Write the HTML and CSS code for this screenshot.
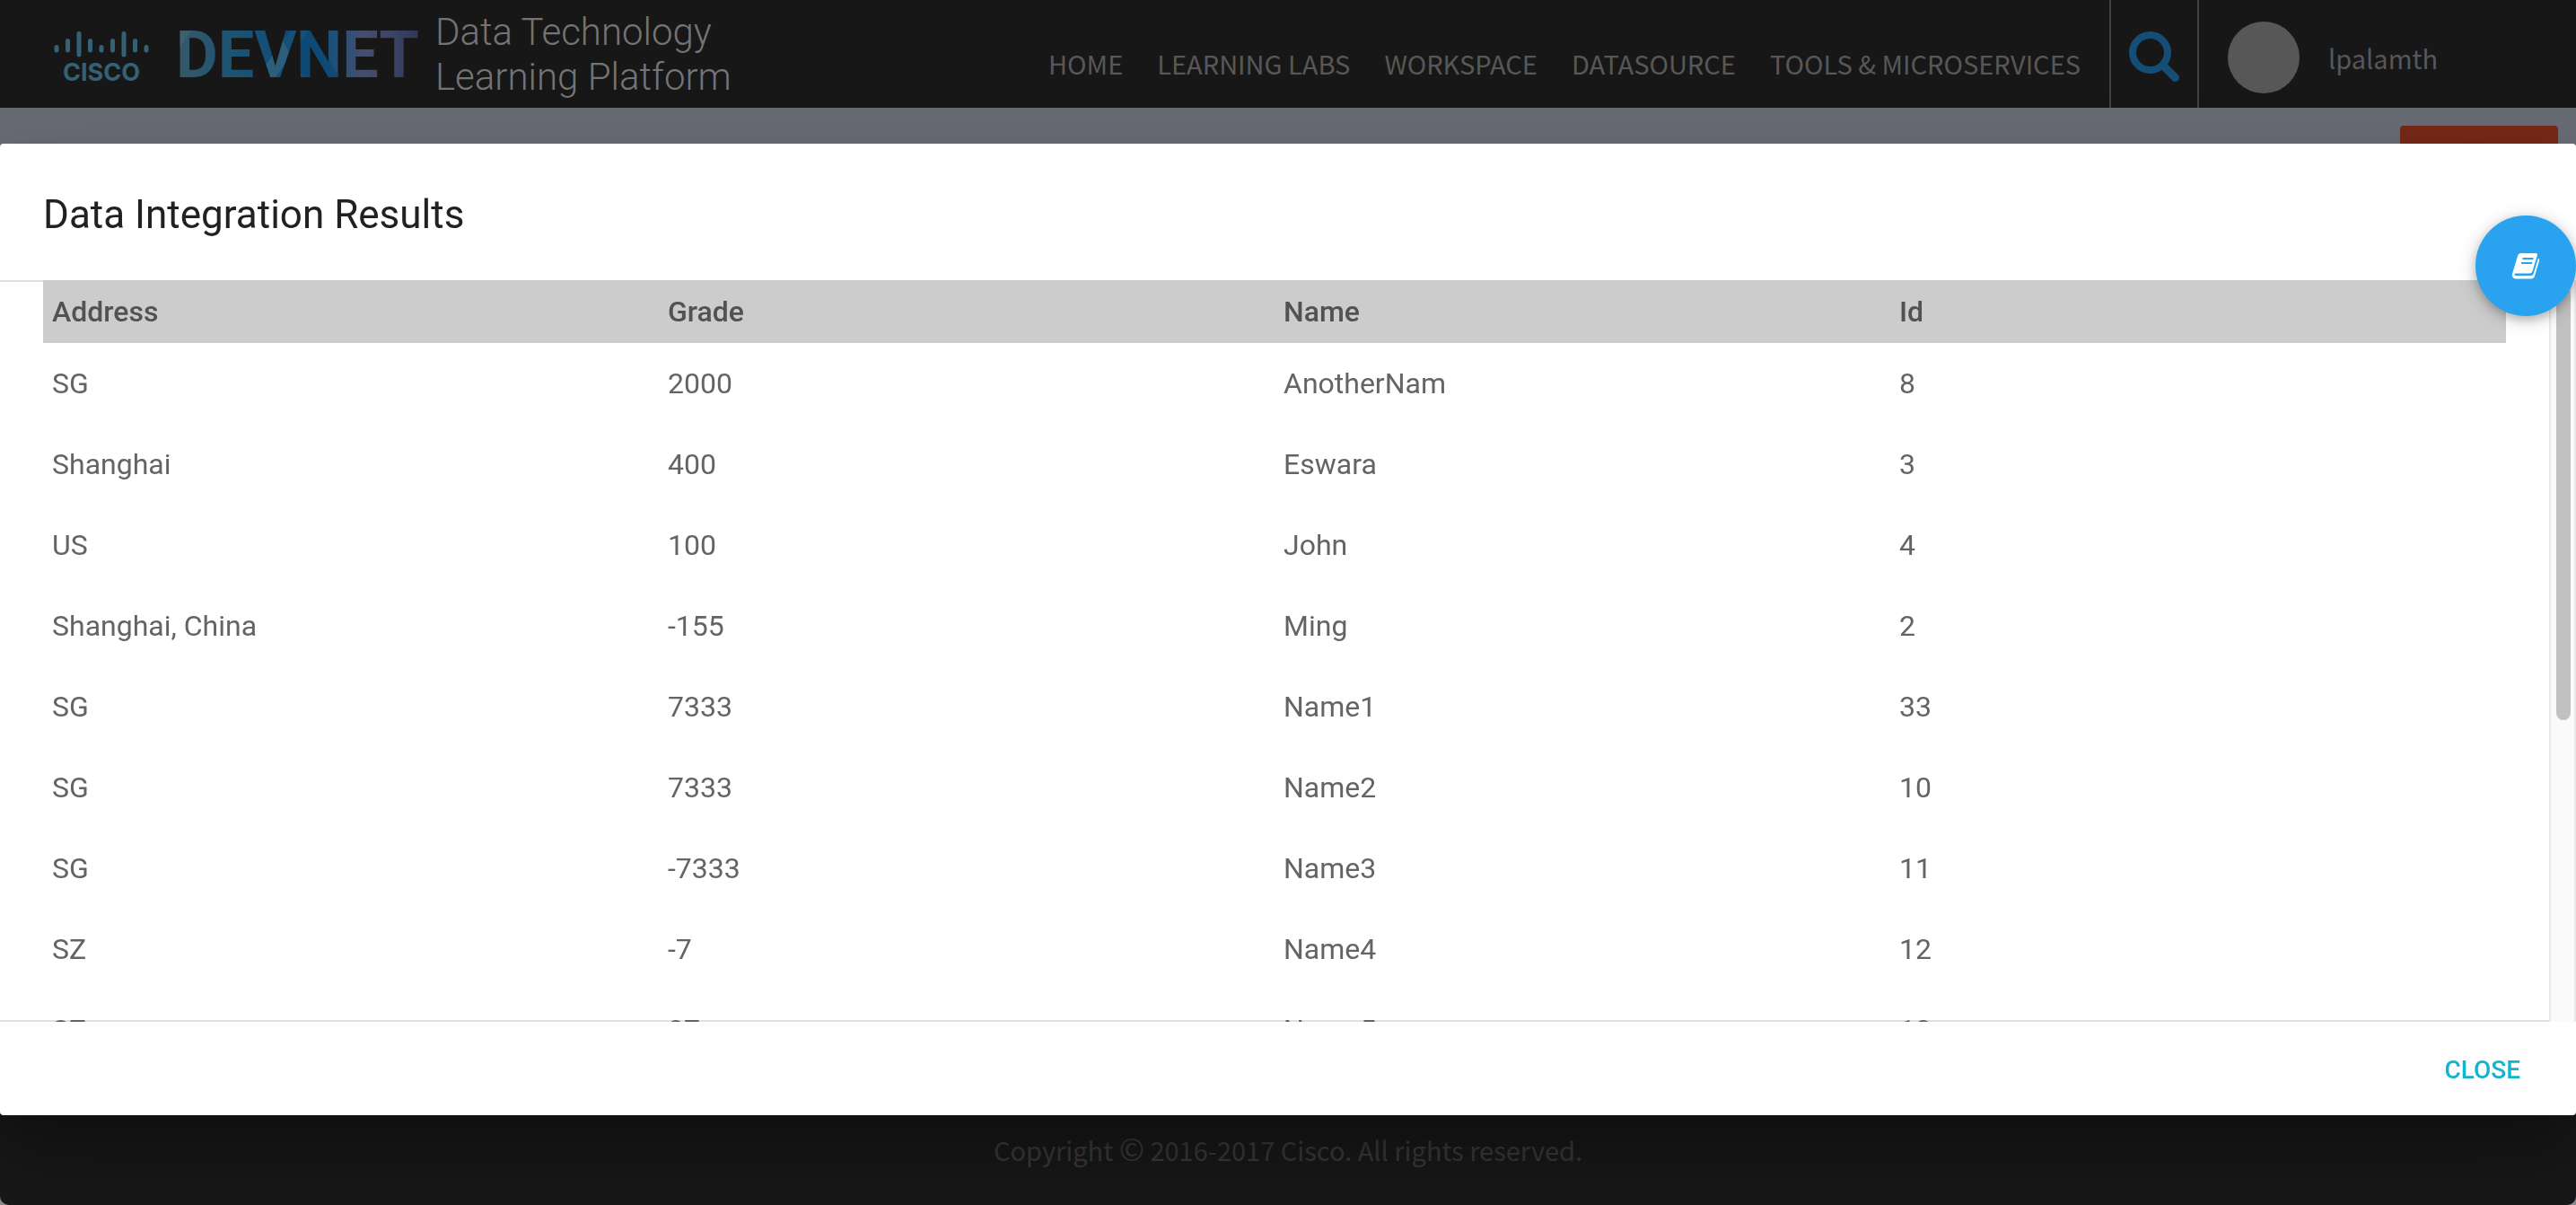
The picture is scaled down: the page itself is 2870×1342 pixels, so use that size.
FILE: index.html
```html
<!DOCTYPE html>
<html lang="en">
<head>
<meta charset="utf-8">
<title>Data Technology Learning Platform</title>
<link rel="stylesheet" href="styles.css">
</head>
<body>
<div class="page">
  <header class="topbar">
    <a class="brand" href="#">
      <span class="cisco">
        <svg class="cisco-bars" width="106" height="32" viewBox="0 0 106 32" aria-hidden="true">
          <g stroke="#356174" stroke-width="5" stroke-linecap="round">
            <path d="M3 18.500V22M15.500 11.500V22M28 3.500V27M40.500 11.500V22M53 18.500V22M65.500 11.500V22M78 3.500V27M90.500 11.500V22M103 18.500V22"/>
          </g>
        </svg>
        <span class="cisco-name">CISCO</span>
      </span>
      <span class="devnet">DEVNET</span>
      <span class="tagline">Data Technology<br>Learning Platform</span>
    </a>
    <nav class="nav">
      <a href="#">HOME</a>
      <a href="#">LEARNING LABS</a>
      <a href="#">WORKSPACE</a>
      <a href="#">DATASOURCE</a>
      <a href="#">TOOLS &amp; MICROSERVICES</a>
    </nav>
    <button class="search" type="button" aria-label="Search">
      <svg width="56" height="56" viewBox="0 0 56 56" aria-hidden="true">
        <circle cx="23.500" cy="23.500" r="19.500" fill="none" stroke="#144e76" stroke-width="8"/>
        <path d="M38 38L51.500 51.500" stroke="#144e76" stroke-width="9" stroke-linecap="round"/>
      </svg>
    </button>
    <a class="user" href="#"><span class="avatar"></span><span>lpalamth</span></a>
  </header>
  <main class="content"><button class="action" type="button" aria-label="Action"></button></main>
  <footer class="footer">Copyright <span class="mark">©</span> 2016-2017 Cisco. All rights reserved.</footer>
</div>

<div class="overlay">
  <section class="modal" role="dialog" aria-labelledby="modal-title">
    <h1 class="modal-title" id="modal-title">Data Integration Results</h1>
    <div class="modal-body">
      <div class="scroller">
        <table class="results">
          <thead><tr><th>Address</th><th>Grade</th><th>Name</th><th>Id</th></tr></thead>
          <tbody>
            <tr><td>SG</td><td>2000</td><td>AnotherNam</td><td>8</td></tr>
            <tr><td>Shanghai</td><td>400</td><td>Eswara</td><td>3</td></tr>
            <tr><td>US</td><td>100</td><td>John</td><td>4</td></tr>
            <tr><td>Shanghai, China</td><td>-155</td><td>Ming</td><td>2</td></tr>
            <tr><td>SG</td><td>7333</td><td>Name1</td><td>33</td></tr>
            <tr><td>SG</td><td>7333</td><td>Name2</td><td>10</td></tr>
            <tr><td>SG</td><td>-7333</td><td>Name3</td><td>11</td></tr>
            <tr><td>SZ</td><td>-7</td><td>Name4</td><td>12</td></tr>
            <tr><td>SZ</td><td>87</td><td>Name5</td><td>13</td></tr>
          </tbody>
        </table>
      </div>
      <div class="track"><div class="thumb"></div></div>
    </div>
    <div class="modal-footer"><button class="close" type="button">CLOSE</button></div>
  </section>
</div>

<button class="fab" type="button" aria-label="Documentation">
  <svg width="32" height="30" viewBox="0 0 32 30" aria-hidden="true">
    <path d="M10 1H27Q29.500 1 28.800 3.500L23.500 21Q22.800 23.500 20 23.500H4.500Q3 23.500 3.500 25Q4 26 5.500 26H22Q24 26 24.600 24L30 6.500Q31.500 7.500 31 9.500L26 26.500Q25 29.500 22 29.500H5Q2 29.500 1 26.500Q0.500 24.500 1.500 22.500L7 4Q8 1 10 1Z" fill="#fff"/>
    <path d="M12.500 7H24.500M11 12H23" stroke="#29a3ef" stroke-width="2"/>
  </svg>
</button>
</body>
</html>
```
FILE: styles.css
```css
* { box-sizing: border-box; }

body {
  margin: 0;
  background: #8b8b90;
  font-family: Roboto, sans-serif;
}

button {
  border: 0;
  padding: 0;
  background: none;
  font: inherit;
  cursor: pointer;
}

a { color: inherit; text-decoration: none; }

.page {
  display: flex;
  flex-direction: column;
  min-height: 100vh;
  border-radius: 0 0 10px 10px;
  overflow: hidden;
  background: #686b73;
}

/* Top bar */
.topbar {
  display: flex;
  align-items: stretch;
  height: 120px;
  background: #171717;
  color: #575757;
  font-family: "Noto Sans CJK SC", sans-serif;
  font-size: 29px;
}

.brand {
  display: flex;
  align-items: flex-start;
  padding-left: 60px;
}

.cisco {
  display: flex;
  flex-direction: column;
  align-items: center;
  width: 106px;
  margin-right: 30px;
  padding-top: 34px;
}

.cisco-name {
  color: #356174;
  font: 700 27px/30px Inter, sans-serif;
}

.devnet {
  margin-right: 18px;
  padding-top: 22px;
  background:
    linear-gradient(60deg, transparent 46%, rgba(10, 70, 115, .6) 46% 58%, transparent 58%),
    linear-gradient(125deg, rgba(64, 100, 115, .7) 12%, transparent 12% 44%, rgba(62, 105, 125, .6) 44% 50%, transparent 50%),
    linear-gradient(90deg, #385866, #1d5473 22%, #124d77 42%, #16507a 62%, #474d6c 78%, #30385a);
  background-clip: text;
  -webkit-background-clip: text;
  color: transparent;
  font: 700 72px/80px Roboto, sans-serif;
}

.tagline {
  padding-top: 11px;
  color: #747474;
  font: 300 42px/50px Roboto, sans-serif;
}

.nav {
  display: flex;
  align-items: center;
  gap: 38px;
  margin-left: auto;
  padding: 20px 32px 0 0;
}

.search {
  display: flex;
  align-items: center;
  justify-content: center;
  width: 100px;
  padding-top: 5px;
  border: solid #414141;
  border-width: 0 2px;
}

.user {
  display: flex;
  align-items: center;
  gap: 32px;
  width: 420px;
  padding: 8px 0 0 32px;
}

.avatar {
  width: 80px;
  height: 80px;
  border-radius: 50%;
  background: #575757;
}

/* Page behind the dialog */
.content {
  display: flex;
  flex: 1;
  justify-content: flex-end;
  align-items: flex-start;
  padding: 20px;
}

.action {
  width: 176px;
  height: 72px;
  border-radius: 4px;
  background: #762818;
}

.footer {
  padding: 36px 0 40px;
  background: #181818;
  color: #393939;
  font: 400 29px/44px "Noto Sans CJK SC", sans-serif;
  text-align: center;
}

.mark {
  font-size: 34px;
  line-height: 1;
}

/* Dialog */
.overlay {
  position: fixed;
  inset: 0;
  display: flex;
  padding: 160px 0 100px;
}

.modal {
  display: flex;
  flex: 1;
  flex-direction: column;
  min-width: 0;
  border-radius: 4px;
  overflow: hidden;
  background: #fff;
  box-shadow: 0 32px 56px rgba(0, 0, 0, .22), 0 50px 110px rgba(0, 0, 0, .21);
}

.modal-title {
  margin: 0;
  padding: 49px 48px 43px;
  color: #212121;
  font-size: 44px;
  font-weight: 400;
  line-height: 60px;
}

.modal-body {
  display: flex;
  flex: 1;
  min-height: 0;
}

.scroller {
  flex: 1;
  padding: 0 48px;
  overflow: auto;
  scrollbar-width: none;
  box-shadow: inset 0 2px #e0e0e0, inset 0 -2px #e0e0e0;
}

.results {
  width: 100%;
  border-collapse: collapse;
  table-layout: fixed;
  color: #646464;
  font-size: 32px;
  line-height: 40px;
  text-align: left;
}

.results th {
  padding: 15px 10px;
  background: #ccc;
  color: #525252;
  font-weight: 500;
}

.results td { padding: 25px 10px; }

.track {
  width: 30px;
  padding: 6px 4px 0;
  border: solid #e8e8e8;
  border-width: 0 2px;
  background: #fafafa;
}

.thumb {
  width: 16px;
  height: 59%;
  margin-left: 2px;
  border-radius: 8px;
  background: #c1c1c1;
}

.modal-footer {
  display: flex;
  justify-content: flex-end;
  align-items: center;
  height: 104px;
  padding: 4px 62px 0 0;
}

.close {
  color: #12b5cb;
  font-size: 28px;
  font-weight: 500;
  line-height: 72px;
}

.fab {
  position: fixed;
  top: 240px;
  right: 0;
  display: flex;
  align-items: center;
  justify-content: center;
  width: 112px;
  height: 112px;
  border-radius: 50%;
  background: #29a3ef;
  box-shadow: 0 4px 10px rgba(0, 0, 0, .16), 0 4px 20px rgba(0, 0, 0, .22);
}
```
